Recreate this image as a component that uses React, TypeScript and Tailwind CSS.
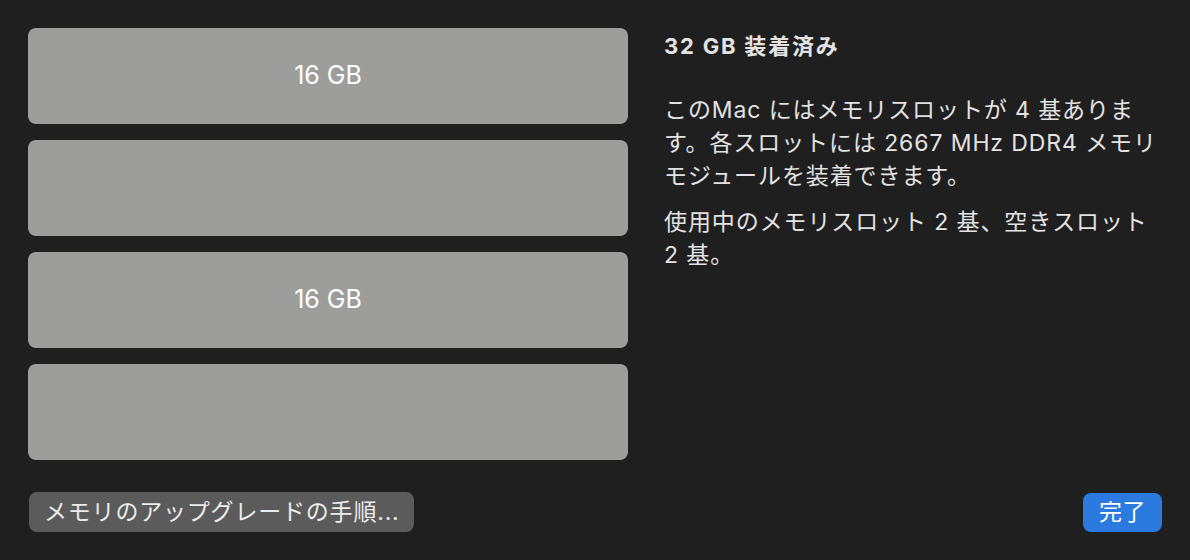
import React from 'react'

const font = { fontFamily: 'Inter, "Noto Sans CJK JP", "Noto Sans", sans-serif' }

const slots = ['16 GB', '', '16 GB', '']

function MemorySlot({ label }: { label: string }) {
  return (
    <div className="flex h-[96px] items-center justify-center rounded-[8px] bg-[#9d9d9c]">
      <span className="text-[25px] text-white">{label}</span>
    </div>
  )
}

export default function App() {
  return (
    <div className="h-[560px] w-[1190px] overflow-hidden bg-[#1f1f1f]" style={font}>
      <div className="flex h-full flex-col px-[28px] pt-[28px] pb-[28px]">
        <div className="flex gap-[36px]">
          <div className="flex w-[600px] flex-col gap-[16px]">
            {slots.map((s, i) => (
              <MemorySlot key={i} label={s} />
            ))}
          </div>
          <div className="flex-1 text-[#e3e3e3]">
            <h2 className="mt-[3px] text-[22px] font-bold leading-[30px] tracking-[1.8px]">32 GB 装着済み</h2>
            <p className="mt-[33px] text-[23px] leading-[33px] tracking-[0.9px]">
              このMac にはメモリスロットが 4 基ありま
              <br />
              す。各スロットには 2667 MHz DDR4 メモリ
              <br />
              モジュールを装着できます。
            </p>
            <p className="mt-[13px] text-[23px] leading-[33px] tracking-[0.9px]">
              使用中のメモリスロット 2 基、空きスロット
              <br />
              2 基。
            </p>
          </div>
        </div>
        <div className="mt-auto flex items-center justify-between">
          <button className="ml-[1px] h-[40px] rounded-[8px] bg-[#5b5b5b] px-[15px] text-[23px] tracking-[0.8px] text-[#ececec]">
            メモリのアップグレードの手順...
          </button>
          <button className="h-[39px] w-[79px] rounded-[8px] bg-[#2a7ae0] text-[23px] tracking-[0.5px] text-white">
            完了
          </button>
        </div>
      </div>
    </div>
  )
}
